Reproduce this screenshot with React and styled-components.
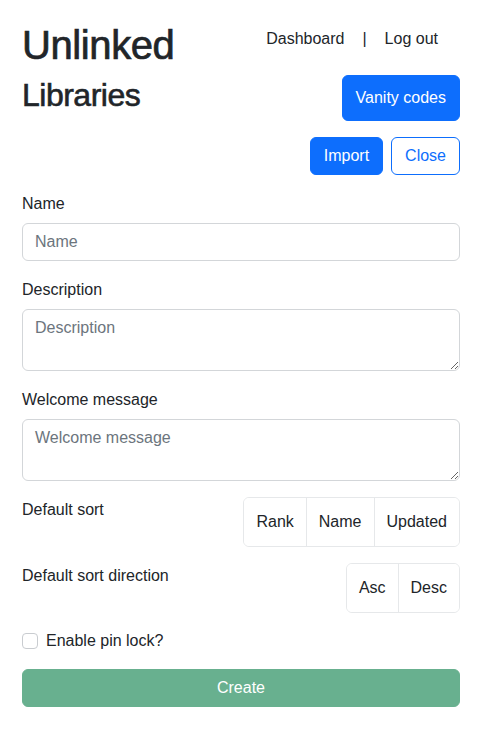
import React from "react";
import styled, { createGlobalStyle } from "styled-components";

const Global = createGlobalStyle`
  * { box-sizing: border-box; }
  html, body { margin: 0; padding: 0; background: #fff; }
  body {
    font-family: "Liberation Sans", Arial, Helvetica, sans-serif;
    font-size: 16px;
    line-height: 24px;
    color: #212529;
  }
`;

const Page = styled.div`
  padding: 21px 23px 22px 22px;
`;

const Header = styled.header`
  display: flex;
  justify-content: space-between;
  align-items: flex-start;
`;

const TitleCol = styled.div`
  display: flex;
  flex-direction: column;
  gap: 7px;
`;

const Title = styled.h1`
  margin: 0;
  font-size: 40px;
  line-height: 48px;
  font-weight: 500;
  letter-spacing: -0.4px;
  -webkit-text-stroke: 0.7px currentColor;
`;

const Subtitle = styled.h2`
  margin: 0;
  font-size: 32px;
  line-height: 38px;
  font-weight: 500;
  letter-spacing: -0.5px;
  -webkit-text-stroke: 0.6px currentColor;
`;

const RightCol = styled.div`
  display: flex;
  flex-direction: column;
  align-items: flex-end;
  gap: 24px;
  padding-top: 6px;
`;

const Nav = styled.nav`
  display: flex;
  align-items: center;
  gap: 18px;
  padding-right: 22px;
`;

const NavLink = styled.a`
  color: #212529;
  text-decoration: none;
  font-size: 16px;
`;

const Sep = styled.span`
  color: #212529;
`;

const Button = styled.button`
  font-family: inherit;
  font-size: 16px;
  line-height: 24px;
  border-radius: 6px;
  padding: ${(p) => (p.$tall ? "10px 13px" : "6px 13px")};
  border: 1px solid #0d6efd;
  background: ${(p) => (p.$outline ? "#fff" : "#0d6efd")};
  color: ${(p) => (p.$outline ? "#0d6efd" : "#fff")};
  cursor: pointer;
`;

const ActionRow = styled.div`
  display: flex;
  justify-content: flex-end;
  gap: 8px;
  margin-top: 16px;
`;

const Form = styled.form`
  margin-top: 16px;
  display: flex;
  flex-direction: column;
  gap: 16px;
`;

const Field = styled.div`
  display: flex;
  flex-direction: column;
`;

const Label = styled.label`
  display: block;
  padding-top: 1px;
  margin-bottom: 7px;
  font-size: 16px;
  line-height: 24px;
`;

const Input = styled.input`
  display: block;
  width: 100%;
  height: 38px;
  padding: 6px 12px;
  font-family: inherit;
  font-size: 16px;
  line-height: 24px;
  color: #212529;
  border: 1px solid #d3d6d9;
  border-radius: 6px;
  &::placeholder { color: #6c757d; }
`;

const TextArea = styled.textarea`
  display: block;
  width: 100%;
  height: 62px;
  padding: 6px 12px;
  font-family: inherit;
  font-size: 16px;
  line-height: 24px;
  color: #212529;
  border: 1px solid #d3d6d9;
  border-radius: 6px;
  resize: vertical;
  &::placeholder { color: #6c757d; }
`;

const ChoiceRow = styled.div`
  display: flex;
  justify-content: space-between;
  align-items: flex-start;
`;

const RowLabel = styled.span`
  font-size: 16px;
  line-height: 24px;
  padding-top: 1px;
`;

const Group = styled.div`
  display: inline-flex;
  border: 1px solid #e6e8ea;
  border-radius: 6px;
  overflow: hidden;
`;

const GroupBtn = styled.button`
  font-family: inherit;
  font-size: 16px;
  line-height: 24px;
  padding: 12px 12px;
  background: #fff;
  color: #212529;
  border: none;
  border-left: ${(p) => (p.$first ? "none" : "1px solid #e6e8ea")};
`;

const CheckRow = styled.label`
  display: flex;
  align-items: center;
  gap: 8px;
  font-size: 16px;
  line-height: 24px;
`;

const Check = styled.input`
  appearance: none;
  width: 16px;
  height: 16px;
  margin: 0;
  border: 1px solid #c9ccd0;
  border-radius: 4px;
  background: #fff;
`;

const Submit = styled.button`
  width: 100%;
  height: 38px;
  font-family: inherit;
  font-size: 16px;
  line-height: 24px;
  border: 1px solid #198754;
  border-radius: 6px;
  background: #198754;
  color: #fff;
  opacity: 0.65;
`;

export default function App() {
  return (
    <>
      <Global />
      <Page>
        <Header>
          <TitleCol>
            <Title>Unlinked</Title>
            <Subtitle>Libraries</Subtitle>
          </TitleCol>
          <RightCol>
            <Nav>
              <NavLink href="#">Dashboard</NavLink>
              <Sep>|</Sep>
              <NavLink href="#">Log out</NavLink>
            </Nav>
            <Button $tall type="button">Vanity codes</Button>
          </RightCol>
        </Header>
        <ActionRow>
          <Button type="button">Import</Button>
          <Button $outline type="button">Close</Button>
        </ActionRow>
        <Form onSubmit={(e) => e.preventDefault()}>
          <Field>
            <Label>Name</Label>
            <Input placeholder="Name" />
          </Field>
          <Field>
            <Label>Description</Label>
            <TextArea placeholder="Description" />
          </Field>
          <Field>
            <Label>Welcome message</Label>
            <TextArea placeholder="Welcome message" />
          </Field>
          <ChoiceRow>
            <RowLabel>Default sort</RowLabel>
            <Group>
              <GroupBtn $first type="button">Rank</GroupBtn>
              <GroupBtn type="button">Name</GroupBtn>
              <GroupBtn type="button">Updated</GroupBtn>
            </Group>
          </ChoiceRow>
          <ChoiceRow>
            <RowLabel>Default sort direction</RowLabel>
            <Group>
              <GroupBtn $first type="button">Asc</GroupBtn>
              <GroupBtn type="button">Desc</GroupBtn>
            </Group>
          </ChoiceRow>
          <CheckRow>
            <Check type="checkbox" />
            Enable pin lock?
          </CheckRow>
          <Submit type="submit" disabled>Create</Submit>
        </Form>
      </Page>
    </>
  );
}
